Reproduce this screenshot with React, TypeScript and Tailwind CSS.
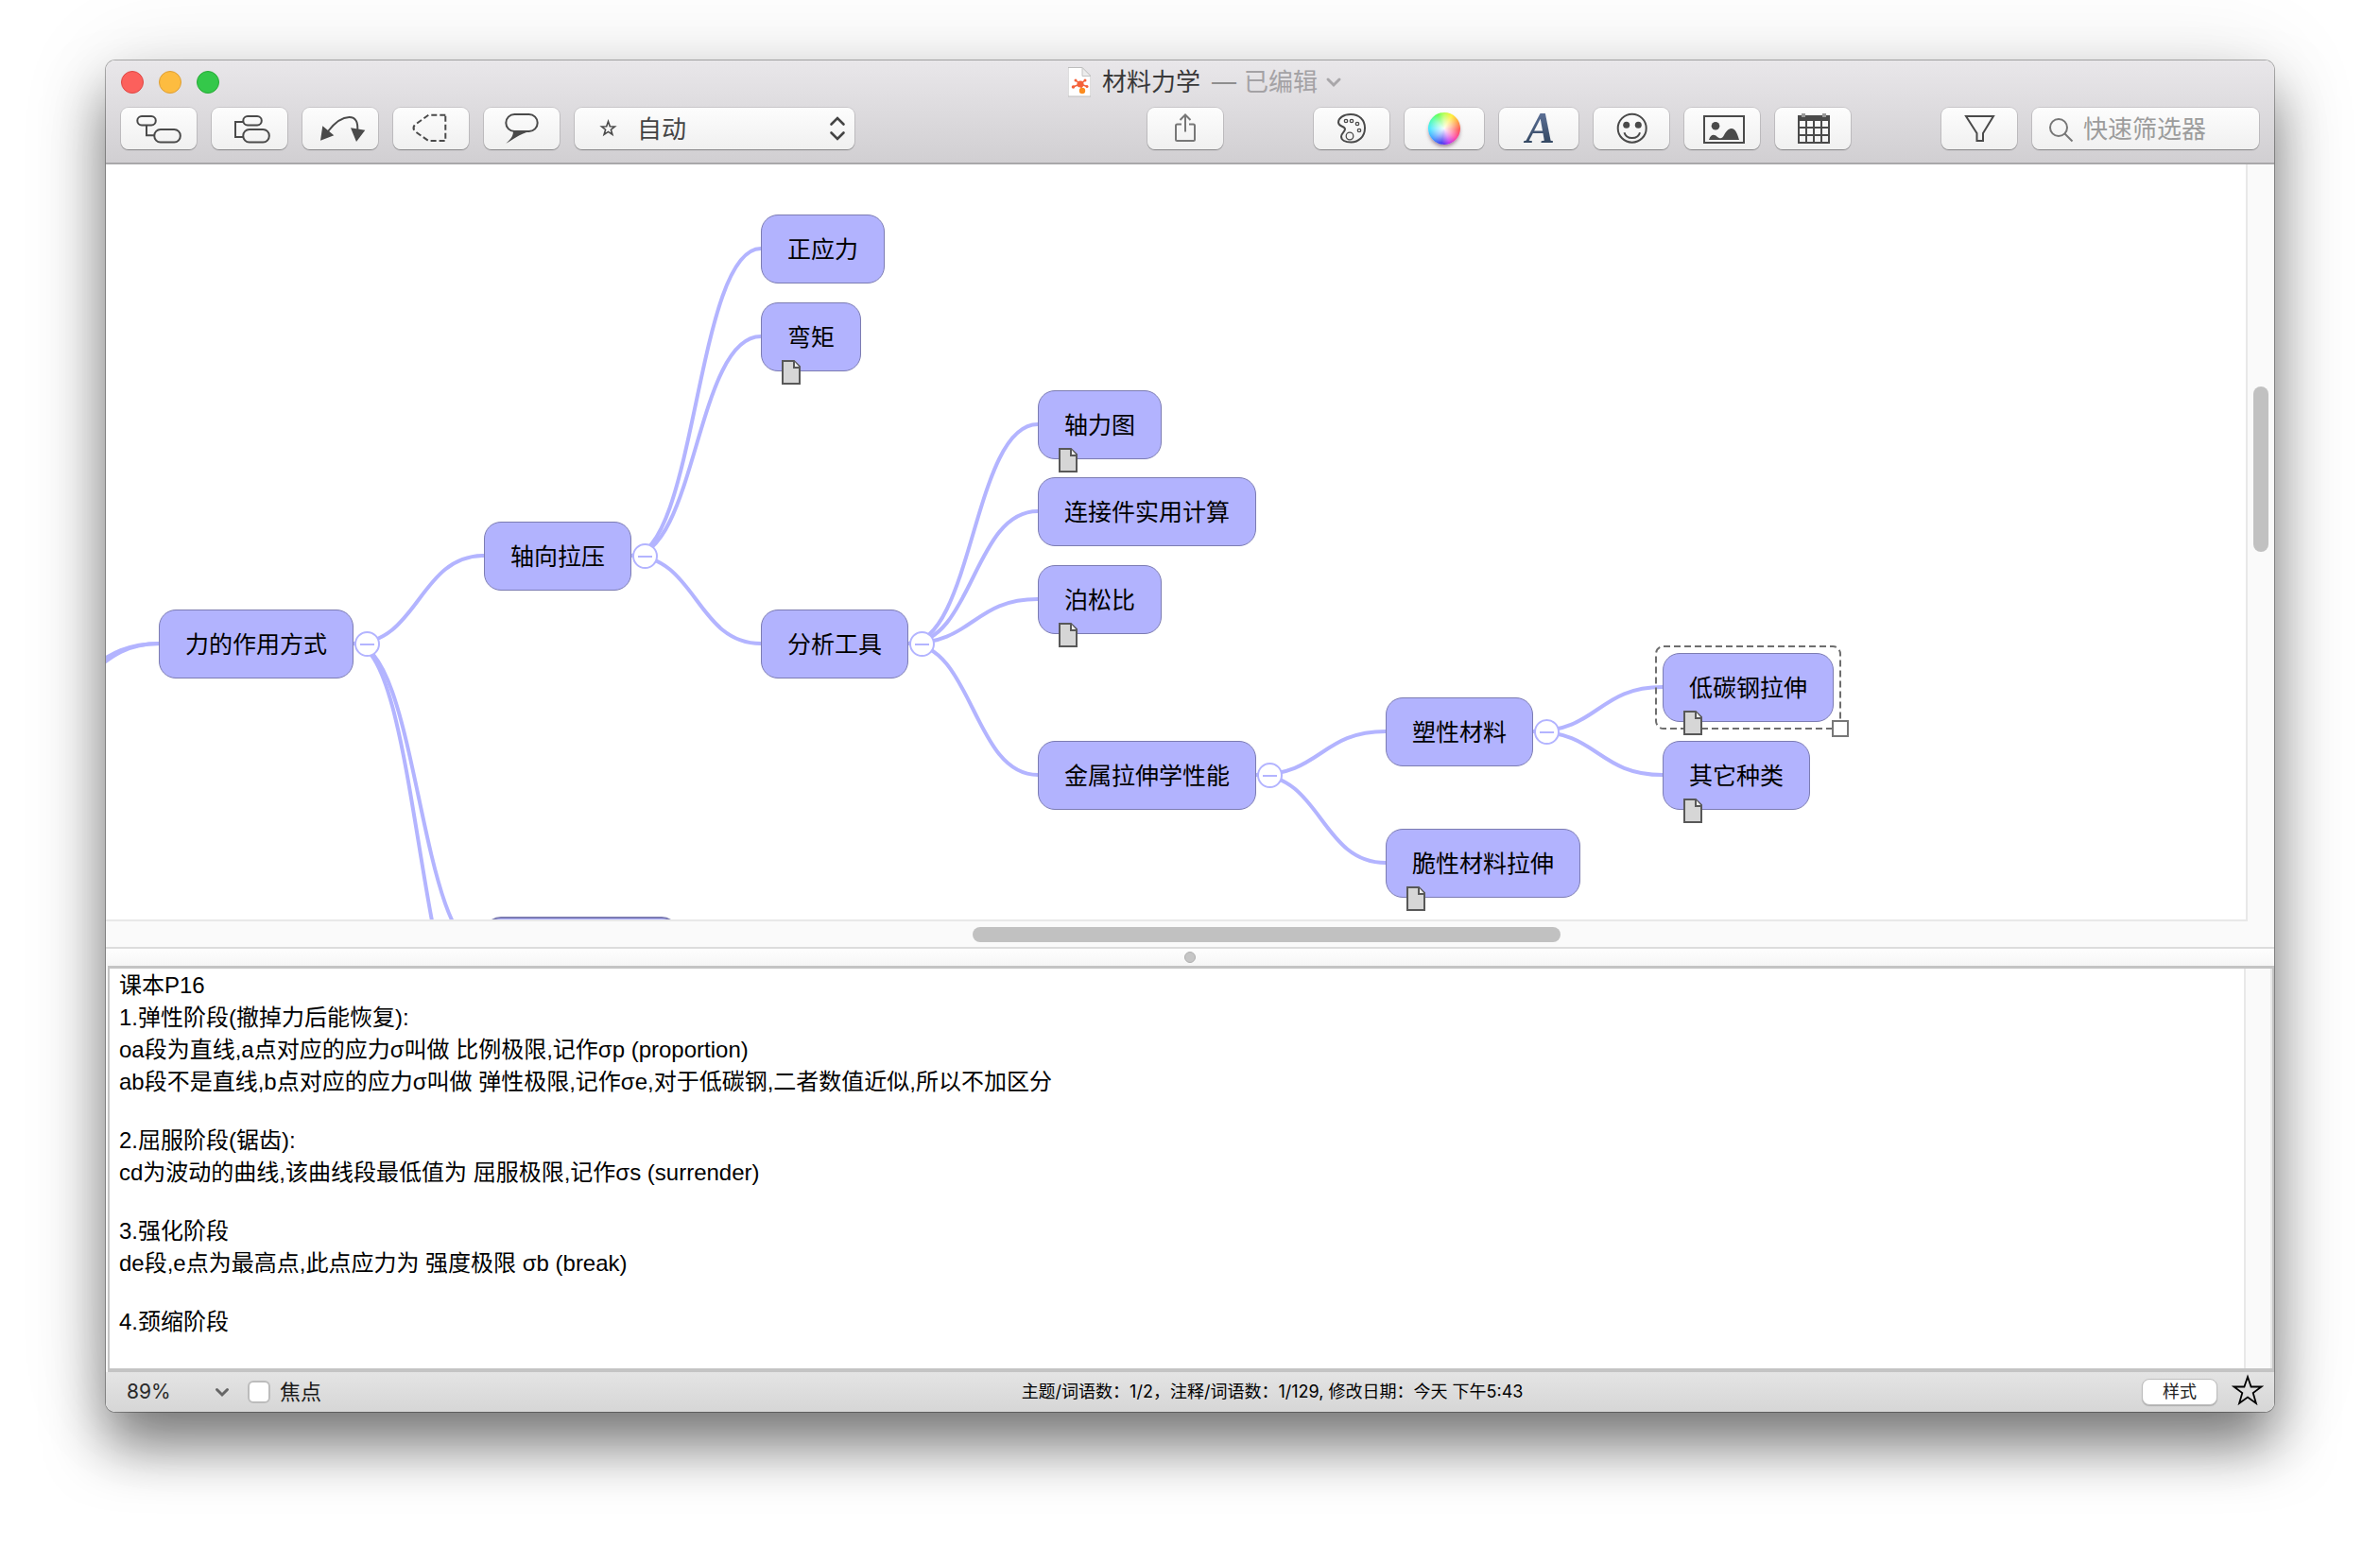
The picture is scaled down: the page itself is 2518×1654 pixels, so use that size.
import type { ReactNode } from 'react';

type Topic = {
  id: string;
  text: string;
  x: number;
  y: number;
  parent?: string;
  note?: boolean;
  open?: boolean;
  selected?: boolean;
};

const topics: Topic[] = [
  { id: 'mode', text: '力的作用方式', x: 56, y: 471, open: true },
  { id: 'axial', text: '轴向拉压', x: 400, y: 378, parent: 'mode', open: true },
  { id: 'stress', text: '正应力', x: 693, y: 53, parent: 'axial' },
  { id: 'moment', text: '弯矩', x: 693, y: 146, parent: 'axial', note: true },
  { id: 'tools', text: '分析工具', x: 693, y: 471, parent: 'axial', open: true },
  { id: 'force', text: '轴力图', x: 986, y: 239, parent: 'tools', note: true },
  { id: 'joint', text: '连接件实用计算', x: 986, y: 331, parent: 'tools' },
  { id: 'poisson', text: '泊松比', x: 986, y: 424, parent: 'tools', note: true },
  { id: 'metal', text: '金属拉伸学性能', x: 986, y: 610, parent: 'tools', open: true },
  { id: 'plastic', text: '塑性材料', x: 1354, y: 564, parent: 'metal', open: true },
  { id: 'brittle', text: '脆性材料拉伸', x: 1354, y: 703, parent: 'metal', note: true },
  { id: 'steel', text: '低碳钢拉伸', x: 1647, y: 517, parent: 'plastic', note: true, selected: true },
  { id: 'kinds', text: '其它种类', x: 1647, y: 610, parent: 'plastic', note: true },
];

const CHAR = 25;
const PAD = 56;
const HALF = 36;

function curve(x1: number, y1: number, x2: number, y2: number) {
  const m = (x1 + x2) / 2;
  return `M${x1} ${y1} C${m} ${y1} ${m} ${y2} ${x2} ${y2}`;
}

function edgeOf(t: Topic) {
  const p = topics.find((o) => o.id === t.parent);
  if (!p) return '';
  return curve(p.x + PAD + CHAR * p.text.length, p.y + HALF, t.x, t.y + HALF);
}

const looseEdges = [
  curve(262, 507, 400, 833),
  curve(262, 507, 400, 930),
  curve(-82, 553, 57, 507),
  curve(-82, 564, 57, 507),
];

function TopicNode({ t }: { t: Topic }) {
  return (
    <div className="absolute flex items-center" style={{ left: t.x, top: t.y }}>
      {t.selected && (
        <svg className="absolute -left-2 -top-2 h-[89px] w-[198px]" fill="none" aria-hidden="true">
          <rect x="1" y="1" width="195" height="87" rx="8" stroke="#6e6e6e" strokeWidth="2" strokeDasharray="7 4" />
        </svg>
      )}
      <div className="relative flex h-[73px] items-center whitespace-nowrap rounded-[18px] border border-[#7c7cb2] bg-[#b2b3fe] px-[27px] text-[25px] leading-9 text-black">
        {t.text}
        {t.note && (
          <svg className="absolute left-[20px] top-[59px] h-7 w-[22px]" viewBox="0 0 22 28" aria-label="注释">
            <path d="M2 2h12l6 6v18H2z" fill="#d6d6d6" stroke="#585858" strokeWidth="2" />
            <path d="M14 2v7h6" fill="#efefef" stroke="#585858" strokeWidth="2" />
          </svg>
        )}
      </div>
      {t.open && (
        <>
          <span className="h-[3px] w-px bg-[#b3b4ff]" />
          <button
            aria-label="折叠"
            className="flex size-[27px] items-center justify-center rounded-full border-2 border-[#b3b4ff] bg-white"
          >
            <span className="h-[2px] w-[15px] bg-[#b3b4ff]" />
          </button>
        </>
      )}
      {t.selected && <span className="absolute -bottom-4 -right-4 size-[18px] border-2 border-[#777] bg-white" />}
    </div>
  );
}

function ToolButton({ label, wide, children }: { label: string; wide?: boolean; children: ReactNode }) {
  return (
    <button
      aria-label={label}
      className={
        'relative flex h-11 shrink-0 items-center justify-center rounded-lg bg-linear-to-b from-[#fdfdfd] to-[#f0f0f0] shadow-[0_0_0_1px_rgba(0,0,0,0.1),0_1px_1px_rgba(0,0,0,0.3)] ' +
        (wide ? 'w-[84px]' : 'w-20')
      }
    >
      {children}
    </button>
  );
}

function Glyph({ children, color = '#4a4a4a' }: { children: ReactNode; color?: string }) {
  return (
    <svg className="h-11 w-20" viewBox="0 0 80 44" fill="none" stroke={color} strokeWidth="2" aria-hidden="true">
      {children}
    </svg>
  );
}

function Toolbar() {
  return (
    <div className="mt-[5px] flex items-start px-4">
      <div className="flex gap-4">
        <ToolButton label="子主题">
          <Glyph>
            <rect x="17.3" y="9" width="19.5" height="9.5" rx="4.7" />
            <rect x="35.3" y="23" width="27.5" height="13.5" rx="6.5" />
            <path d="M27 19v10.3h8" />
          </Glyph>
        </ToolButton>
        <ToolButton label="同级主题">
          <Glyph>
            <rect x="33.3" y="9" width="19.5" height="9.5" rx="4.7" />
            <rect x="33.3" y="23" width="27.5" height="13.5" rx="6.5" />
            <path d="M33 15h-8v16h8" />
          </Glyph>
        </ToolButton>
        <ToolButton label="关系">
          <Glyph>
            <path d="M27 25C34 16 42 10 49.5 10C57 10 58.5 16 58.3 23" />
            <path d="M19 34.7L21.3 19.3L33.3 29.3zM51 21.3L66.3 23.7L57 36z" fill="#4a4a4a" stroke="none" />
          </Glyph>
        </ToolButton>
        <ToolButton label="边界">
          <Glyph>
            <path d="M55.3 7.7H37.3L23 18Q20 21.3 23 25L37.3 35H55.3z" strokeDasharray="6 3" />
          </Glyph>
        </ToolButton>
        <ToolButton label="标注">
          <Glyph>
            <rect x="23.3" y="7" width="33.4" height="18" rx="9" />
            <path d="M31 25h17.5C37 28 31 34 23.3 37.7C28 34 31 30 31 25z" fill="#4a4a4a" stroke="none" />
          </Glyph>
        </ToolButton>
        <div className="relative">
          <select
            aria-label="样式"
            defaultValue="自动"
            className="h-11 w-[296px] appearance-none rounded-lg bg-linear-to-b from-[#fdfdfd] to-[#f0f0f0] pl-[66px] text-[26px] text-[#444] shadow-[0_0_0_1px_rgba(0,0,0,0.1),0_1px_1px_rgba(0,0,0,0.3)]"
          >
            <option>自动</option>
          </select>
          <svg className="pointer-events-none absolute left-[26px] top-3 size-5" viewBox="0 0 20 20" fill="none" stroke="#4a4a4a" strokeWidth="1.6" aria-hidden="true">
            <path d="M9.5 2.5l1.8 5.2 5.2.2-4.1 3.3 1.5 5.2-4.4-3-4.4 3 1.5-5.2-4.1-3.3 5.2-.2z" />
          </svg>
          <svg className="pointer-events-none absolute right-[9px] top-2 h-7 w-[18px]" viewBox="0 0 18 28" fill="none" stroke="#444" strokeWidth="2.6" strokeLinecap="round" aria-hidden="true">
            <path d="M2.5 9.5L9 3l6.5 6.5M2.5 18.5L9 25l6.5-6.5" />
          </svg>
        </div>
      </div>

      <div className="ml-auto">
        <ToolButton label="共享">
          <Glyph color="#777">
            <path d="M36 17.5H31.5Q30 17.5 30 19V33.5Q30 35 31.5 35H48.5Q50 35 50 33.5V19Q50 17.5 48.5 17.5H44M40 25.5V8M34.5 13L40 7.5L45.5 13" />
          </Glyph>
        </ToolButton>
      </div>

      <div className="ml-24 flex gap-4">
        <ToolButton label="调色板">
          <Glyph>
            <path d="M39 7C48 7 54 13 54 21.5C54 31 47 36.5 39.5 36.5C33 36.5 29 34 29 30.5C29 27 33 25.5 33 22.8C33 19 26 20.5 26 15.5C26 11 31 7 39 7z" />
            <g strokeWidth="1.3">
              <circle cx="34" cy="14" r="1.7" />
              <circle cx="40" cy="14" r="1.7" />
              <circle cx="46" cy="17" r="1.7" />
              <circle cx="48" cy="24" r="1.7" />
              <circle cx="38" cy="30" r="3.8" />
            </g>
          </Glyph>
        </ToolButton>
        <ToolButton label="颜色" wide>
          <span className="size-[34px] rounded-full bg-[radial-gradient(circle,rgba(255,255,255,0.95)_0%,rgba(255,255,255,0.5)_35%,rgba(255,255,255,0)_70%),conic-gradient(#b8ff50,#ffee30_30deg,#ff9a40_65deg,#ff5050_95deg,#ff40a0_130deg,#c030f0_160deg,#3a30f0_190deg,#4090ff_225deg,#40e8ff_270deg,#50ffa0_310deg,#60ff50_335deg,#b8ff50)] shadow-[0_3px_4px_-1px_rgba(60,0,40,0.5)]" />
        </ToolButton>
        <ToolButton label="字体" wide>
          <span className="bg-linear-to-b from-[#6478a0] to-[#2c4058] bg-clip-text pl-1 pr-px font-['Liberation_Serif',serif] text-[46px] font-bold italic leading-[44px] text-transparent">
            A
          </span>
        </ToolButton>
        <ToolButton label="贴纸">
          <Glyph>
            <circle cx="40.7" cy="21.7" r="15" />
            <circle cx="34.7" cy="18.3" r="3.5" fill="#4a4a4a" stroke="none" />
            <circle cx="47.3" cy="18.3" r="3.5" fill="#4a4a4a" stroke="none" />
            <path d="M32.5 26.2C34.5 34 47 34 49 26.2" />
          </Glyph>
        </ToolButton>
        <ToolButton label="图像">
          <Glyph>
            <rect x="21" y="9" width="42" height="28" />
            <circle cx="33" cy="19.3" r="4.3" fill="#4a4a4a" stroke="none" />
            <path d="M26 34C28 27.5 32 28 35 31C38 33 40 33 42 29C45 23 48 22 50 22C54 22 56 27 58 34z" fill="#4a4a4a" stroke="none" />
          </Glyph>
        </ToolButton>
        <ToolButton label="表格">
          <Glyph>
            <path d="M24 8h34v6H24z" fill="#4a4a4a" stroke="none" />
            <rect x="25" y="13" width="32" height="24" />
            <path d="M24 21h34M24 29h34M33 13v24M41 13v24M49 13v24" />
            <path d="M28 6h4v4h-4zM50 6h4v4h-4z" fill="#999" stroke="none" />
          </Glyph>
        </ToolButton>
      </div>

      <div className="ml-24 flex gap-4">
        <ToolButton label="筛选">
          <Glyph>
            <path d="M26 9H55L44 27V35H37.5V27z" />
          </Glyph>
        </ToolButton>
        <div className="relative">
          <svg className="pointer-events-none absolute left-4 top-2 size-[30px]" viewBox="0 0 30 30" fill="none" stroke="#777" strokeWidth="2" aria-hidden="true">
            <circle cx="12" cy="13" r="9" />
            <path d="M18.5 19.5l8 8" />
          </svg>
          <input
            aria-label="快速筛选器"
            placeholder="快速筛选器"
            className="h-11 w-60 rounded-lg bg-linear-to-b from-[#fdfdfd] to-[#f0f0f0] pl-[54px] text-[26px] shadow-[0_0_0_1px_rgba(0,0,0,0.1),0_1px_1px_rgba(0,0,0,0.3)] placeholder:text-[#9c9c9c]"
          />
        </div>
      </div>
    </div>
  );
}

function TitleBar() {
  return (
    <div className="grid h-[45px] grid-cols-[1fr_auto_1fr] items-center px-4">
      <div className="flex gap-4">
        <button aria-label="关闭" className="size-6 rounded-full border border-[#df4744] bg-[#fc605c]" />
        <button aria-label="最小化" className="size-6 rounded-full border border-[#de9f34] bg-[#fdbc40]" />
        <button aria-label="缩放" className="size-6 rounded-full border border-[#27aa35] bg-[#34c84a]" />
      </div>
      <div className="flex items-center pl-8 text-[26px] leading-9">
        <svg className="mr-3 h-8 w-6" viewBox="0 0 24 32" aria-hidden="true">
          <path d="M0 .5h15l9 9V31H0z" fill="#fff" stroke="#bdbdbd" />
          <path d="M15 .5v9h9z" fill="#ececec" stroke="#c4c4c4" />
          <path d="M13 18L8 14M13 18l5-4M13 18l-8 3M13 18l7 2.5M13 18l2 7" stroke="#f4623a" strokeWidth="1.5" />
          <circle cx="13" cy="18" r="3.6" fill="#f4623a" />
          <circle cx="8" cy="14" r="1.5" fill="#f4623a" />
          <circle cx="18" cy="14" r="1.5" fill="#f4623a" />
          <circle cx="5.5" cy="21" r="1.8" fill="#f4623a" />
          <circle cx="20" cy="20.5" r="1.5" fill="#f4623a" />
          <circle cx="15" cy="25" r="3.2" fill="#fb8c20" />
        </svg>
        <h1 className="text-[#383838]">材料力学</h1>
        <span className="ml-3 text-[#8e8e8e]">—</span>
        <span className="ml-2 text-[#a4a2a5]">已编辑</span>
        <svg className="ml-2 h-4 w-[18px]" viewBox="0 0 18 16" fill="none" stroke="#a9a7aa" strokeWidth="3" strokeLinecap="round" aria-hidden="true">
          <path d="M3 5l6 6 6-6" />
        </svg>
      </div>
    </div>
  );
}

function MindMap() {
  return (
    <div className="flex min-h-0 flex-1 border-b-2 border-[#dcdcdc]">
      <div className="flex min-w-0 flex-1 flex-col">
        <div className="relative min-h-0 flex-1 overflow-hidden bg-white">
          <svg className="absolute inset-0 size-full" fill="none" stroke="#b3b4ff" strokeWidth="4" aria-hidden="true">
            {topics.filter((t) => t.parent).map((t) => (
              <path key={t.id} d={edgeOf(t)} />
            ))}
            {looseEdges.map((d) => (
              <path key={d} d={d} />
            ))}
          </svg>
          <div className="absolute left-[400px] top-[796px] h-[73px] w-[206px] rounded-[18px] border-2 border-[#7c7cb2] bg-[#b2b3fe]" />
          {topics.map((t) => (
            <TopicNode key={t.id} t={t} />
          ))}
        </div>
        <div className="h-[29px] border-t-2 border-[#e8e8e8] bg-[#fafafa] pt-[6px]">
          <div className="ml-[917px] h-4 w-[622px] rounded-full bg-[#c1c1c1]" />
        </div>
      </div>
      <div className="flex w-[30px] flex-col">
        <div className="min-h-0 flex-1 border-l-2 border-[#e8e8e8] bg-[#fafafa] pt-[235px]">
          <div className="ml-[6px] h-[175px] w-4 rounded-full bg-[#c1c1c1]" />
        </div>
        <div className="h-[27px] bg-[#fafafa]" />
      </div>
    </div>
  );
}

const notes = [
  '课本P16',
  '1.弹性阶段(撤掉力后能恢复):',
  'oa段为直线,a点对应的应力σ叫做 比例极限,记作σp (proportion)',
  'ab段不是直线,b点对应的应力σ叫做 弹性极限,记作σe,对于低碳钢,二者数值近似,所以不加区分',
  '',
  '2.屈服阶段(锯齿):',
  'cd为波动的曲线,该曲线段最低值为 屈服极限,记作σs (surrender)',
  '',
  '3.强化阶段',
  'de段,e点为最高点,此点应力为 强度极限 σb (break)',
  '',
  '4.颈缩阶段',
];

function Notes() {
  return (
    <div className="ml-[2px] flex min-h-[430px] border-x-2 border-b-4 border-t-[3px] border-[#c4c4c4] bg-white">
      <div
        role="textbox"
        aria-label="注释"
        aria-multiline="true"
        contentEditable
        suppressContentEditableWarning
        className="flex-1 px-[10px] pt-px font-['Liberation_Sans','Noto_Sans_CJK_SC',sans-serif] text-[24px] leading-[34px] text-black outline-none"
      >
        {notes.map((line, i) => (
          <p key={i} className={line ? 'h-[34px]' : 'h-7'}>
            {line}
          </p>
        ))}
      </div>
      <div className="w-[30px] border-x-2 border-[#e8e8e8] bg-[#fafafa]" />
    </div>
  );
}

function StatusBar() {
  return (
    <div className="flex h-[42px] items-center bg-linear-to-b from-[#e4e4e4] to-[#d6d6d6] pl-[22px] pr-[11px]">
      <div className="relative">
        <select aria-label="缩放比例" defaultValue="89%" className="w-32 appearance-none font-['Inter',sans-serif] text-[21px] leading-8 text-[#2a2a2a]">
          <option>89%</option>
        </select>
        <svg className="pointer-events-none absolute right-[18px] top-2 h-4 w-[18px]" viewBox="0 0 18 16" fill="none" stroke="#666" strokeWidth="3" strokeLinecap="round" aria-hidden="true">
          <path d="M3.5 5.5l5.5 5.5 5.5-5.5" />
        </svg>
      </div>
      <label className="flex items-center gap-[10px] text-[22px] leading-8 text-[#1a1a1a]">
        <input type="checkbox" className="size-6 appearance-none rounded-md border-2 border-[#bcbcbc] bg-white" />
        焦点
      </label>
      <p className="flex-1 pl-[86px] text-center text-[18px] leading-8 text-black">
        主题/词语数：1/2，注释/词语数：1/129, 修改日期：今天 下午5:43
      </p>
      <button className="h-7 w-20 rounded-lg border border-[#bdbdbd] bg-white text-[18px] leading-6 text-[#222] shadow-[0_1px_1px_rgba(0,0,0,0.2)]">样式</button>
      <button aria-label="收藏" className="ml-[15px] pb-1">
        <svg className="size-[34px]" viewBox="0 0 34 34" fill="none" stroke="#000" strokeWidth="1.8" aria-hidden="true">
          <path d="M17 3l3.6 10.5H31.5L22.7 20l3.2 11L17 24.5 8.1 31l3.2-11-8.8-6.5h10.9z" />
        </svg>
      </button>
    </div>
  );
}

export default function App() {
  return (
    <div className="flex min-h-screen flex-col overflow-hidden bg-white px-28 pb-40 pt-16 font-['Inter','Noto_Sans_CJK_SC',sans-serif]">
      <main className="flex flex-1 flex-col rounded-[10px] shadow-[0_0_0_1px_rgba(0,0,0,0.3),0_0_100px_rgba(0,0,0,0.1),0_36px_60px_rgba(0,0,0,0.5)]">
        <div className="flex flex-1 flex-col overflow-hidden rounded-[10px] bg-[#fafafa]">
          <header className="h-[110px] border-b-2 border-[#a9a8aa] bg-linear-to-b from-[#e9e7ea] to-[#d1cfd2]">
            <TitleBar />
            <Toolbar />
          </header>
          <MindMap />
          <div className="flex h-[18px] items-center justify-center bg-linear-to-b from-[#fefefe] to-[#f6f6f6]">
            <span className="size-3 rounded-full border border-[#b0b0b0] bg-[#c6c6c6]" />
          </div>
          <Notes />
          <StatusBar />
        </div>
      </main>
    </div>
  );
}
